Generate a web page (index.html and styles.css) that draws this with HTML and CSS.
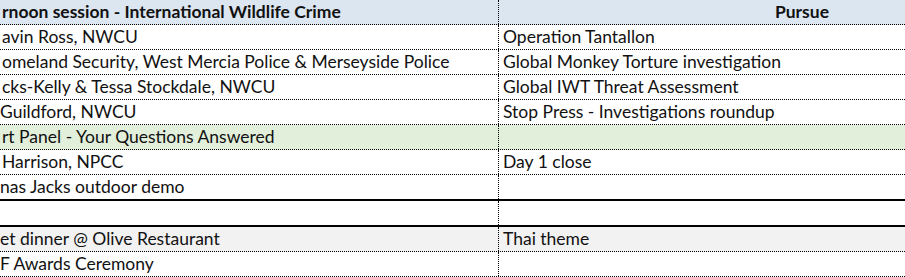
FILE: index.html
```html
<!DOCTYPE html>
<html lang="en">
<head>
<meta charset="utf-8">
<title>Conference programme</title>
<link rel="stylesheet" href="styles.css">
</head>
<body>
<div class="sheet">
  <div class="row head">
    <div class="c1"><span class="t">rnoon session - International Wildlife Crime</span></div>
    <div class="c2 center">Pursue</div>
  </div>
  <div class="row">
    <div class="c1"><span class="t">avin Ross, NWCU</span></div>
    <div class="c2">Operation Tantallon</div>
  </div>
  <div class="row">
    <div class="c1"><span class="t">omeland Security, West Mercia Police &amp; Merseyside Police</span></div>
    <div class="c2">Global Monkey Torture investigation</div>
  </div>
  <div class="row">
    <div class="c1"><span class="t">cks-Kelly &amp; Tessa Stockdale, NWCU</span></div>
    <div class="c2">Global IWT Threat Assessment</div>
  </div>
  <div class="row">
    <div class="c1"><span class="t flush">Guildford, NWCU</span></div>
    <div class="c2">Stop Press - Investigations roundup</div>
  </div>
  <div class="row green">
    <div class="c1"><span class="t">rt Panel - Your Questions Answered</span></div>
    <div class="c2"></div>
  </div>
  <div class="row">
    <div class="c1"><span class="t">Harrison, NPCC</span></div>
    <div class="c2">Day 1 close</div>
  </div>
  <div class="row thick">
    <div class="c1"><span class="t flush">nas Jacks outdoor demo</span></div>
    <div class="c2"></div>
  </div>
  <div class="row thick">
    <div class="c1"></div>
    <div class="c2"></div>
  </div>
  <div class="row grey">
    <div class="c1"><span class="t flush">et dinner @ Olive Restaurant</span></div>
    <div class="c2">Thai theme</div>
  </div>
  <div class="row">
    <div class="c1"><span class="t flush">F Awards Ceremony</span></div>
    <div class="c2"></div>
  </div>
</div>
</body>
</html>
```

FILE: styles.css
```css
html, body {
  margin: 0;
  padding: 0;
  background: #ffffff;
  overflow: hidden;
}

.sheet {
  width: 905px;
  font-family: Lato, "Noto Sans", sans-serif;
  font-size: 17.5px;
  color: #111111;
}

.row {
  display: grid;
  grid-template-columns: 499px 406px;
  height: 25px;
  box-sizing: border-box;
  border-bottom: 1px dotted #000000;
}

.row.thick {
  height: 26px;
  border-bottom: 2px solid #000000;
}

.row.head {
  background: #dce6f1;
  font-weight: bold;
}

.row.green {
  background: #e2efda;
}

.row.grey {
  background: #f2f2f2;
}

.c1,
.c2 {
  box-sizing: border-box;
  overflow: hidden;
  white-space: nowrap;
  display: flex;
  align-items: flex-end;
  padding-bottom: 2px;
  line-height: 20px;
}

.c1 {
  border-right: 1px dotted #000000;
  padding-left: 2px;
}

.c2 {
  padding-left: 4px;
}

.c2.center {
  justify-content: center;
  padding-left: 200px;
}

.t {
  display: block;
}

.t.flush {
  margin-left: -2px;
}
```
